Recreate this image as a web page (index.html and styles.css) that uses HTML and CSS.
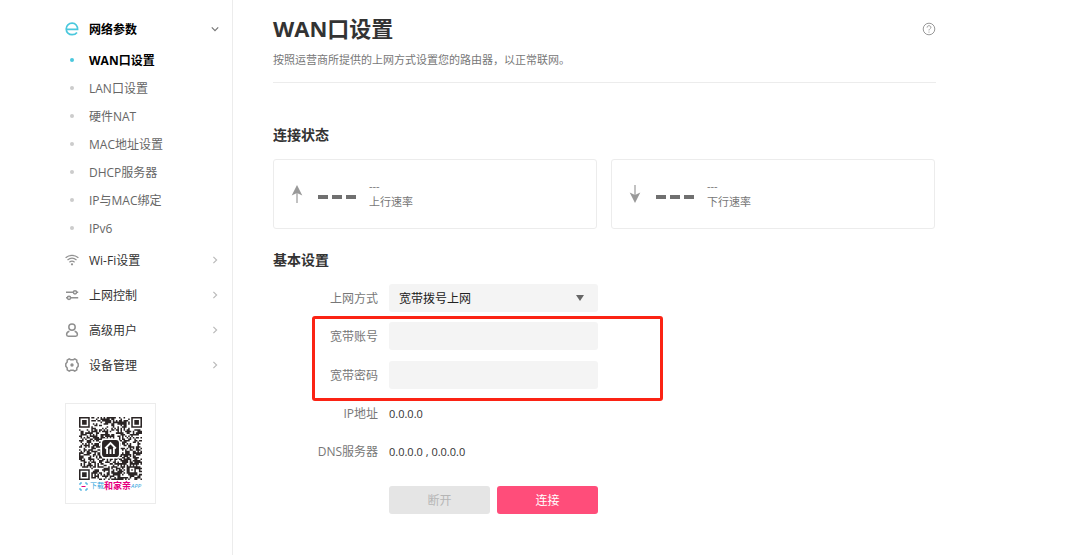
FILE: index.html
```html
<!DOCTYPE html>
<html lang="zh-CN">
<head>
    <meta charset="UTF-8">
    <meta name="viewport" content="width=device-width, initial-scale=1.0">
    <title>WAN口设置</title>
    <link rel="stylesheet" href="styles.css">
</head>
<body>
    <div class="page">
        <aside class="sidebar">
            <nav>
                <a class="menu-item active" href="#network">
                    <svg class="menu-icon" viewBox="0 0 14 14"><path d="M1.6 7.4H12.6C12.8 3.8 10.4 1.2 7.1 1.2C3.8 1.2 1.2 3.8 1.2 7C1.2 10.2 3.8 12.7 7.1 12.7C9.2 12.7 10.9 11.9 12 10.5"/></svg>
                    <span>网络参数</span>
                    <svg class="chevron" viewBox="0 0 8 8"><path d="M0.8 2.4L4 5.6L7.2 2.4"/></svg>
                </a>
                <ul class="submenu">
                    <li class="current"><a href="#wan">WAN口设置</a></li>
                    <li><a href="#lan">LAN口设置</a></li>
                    <li><a href="#nat">硬件NAT</a></li>
                    <li><a href="#mac">MAC地址设置</a></li>
                    <li><a href="#dhcp">DHCP服务器</a></li>
                    <li><a href="#bind">IP与MAC绑定</a></li>
                    <li><a href="#ipv6">IPv6</a></li>
                </ul>
                <a class="menu-item" href="#wifi">
                    <svg class="menu-icon thin" viewBox="0 0 14 14"><path d="M0.6 4.8C4.3 1.5 9.7 1.5 13.4 4.8M2.5 7C5.2 4.8 8.8 4.8 11.5 7M4.4 9.2C6 7.9 8 7.9 9.6 9.2"/><circle class="solid" cx="7" cy="11.3" r="1.1"/></svg>
                    <span>Wi-Fi设置</span>
                    <svg class="chevron" viewBox="0 0 8 8"><path d="M2.4 0.8L5.6 4L2.4 7.2"/></svg>
                </a>
                <a class="menu-item" href="#control">
                    <svg class="menu-icon" viewBox="0 0 14 14"><path d="M1 4.3H8.2M11.8 4.3H13.2M1 9.8H2.2M5.8 9.8H13.2"/><circle cx="10" cy="4.3" r="1.6"/><circle cx="4" cy="9.8" r="1.6"/></svg>
                    <span>上网控制</span>
                    <svg class="chevron" viewBox="0 0 8 8"><path d="M2.4 0.8L5.6 4L2.4 7.2"/></svg>
                </a>
                <a class="menu-item" href="#user">
                    <svg class="menu-icon" viewBox="0 0 14 14"><circle cx="7" cy="4.1" r="3.2"/><path d="M4.4 8.2C2.6 8.6 1.6 9.9 1.6 11.5C1.6 12.7 2.2 13.2 3.2 13.2H10.8C11.8 13.2 12.4 12.7 12.4 11.5C12.4 9.9 11.4 8.6 9.6 8.2"/></svg>
                    <span>高级用户</span>
                    <svg class="chevron" viewBox="0 0 8 8"><path d="M2.4 0.8L5.6 4L2.4 7.2"/></svg>
                </a>
                <a class="menu-item" href="#device">
                    <svg class="menu-icon" viewBox="0 0 14 14"><path d="M4.2 0.9L5.6 1.7H8.4L9.8 0.9L11.8 2.1V3.9L13.2 5.8V8.2L11.8 10.1V11.9L9.8 13.1L8.4 12.3H5.6L4.2 13.1L2.2 11.9V10.1L0.8 8.2V5.8L2.2 3.9V2.1Z"/><circle class="solid" cx="7" cy="7" r="1.7"/></svg>
                    <span>设备管理</span>
                    <svg class="chevron" viewBox="0 0 8 8"><path d="M2.4 0.8L5.6 4L2.4 7.2"/></svg>
                </a>
            </nav>
            <div class="qr-card">
                <svg class="qr" viewBox="0 0 41 41" role="img" aria-label="和家亲APP">
                    <path id="qr-modules"/>
                    <rect class="qr-clear" x="14" y="14" width="13" height="13" rx="3"/>
                    <rect class="qr-logo" x="15" y="15" width="11" height="11" rx="2"/>
                    <path class="qr-house" d="M17 20.5L20.5 17L24 20.5M18.3 20V24M22.7 20V24M20.5 21V24"/>
                </svg>
                <div class="qr-text">
                    <svg class="scan" viewBox="0 0 9 9"><path d="M1 3V1H3M6 1H8V3M8 6V8H6M3 8H1V6"/><path class="scan-line" d="M2.5 4.5H6.5"/></svg>
                    <span>下载</span><b>和家亲</b><i>APP</i>
                </div>
            </div>
        </aside>

        <main class="content">
            <header class="page-head">
                <div>
                    <h1>WAN口设置</h1>
                    <p>按照运营商所提供的上网方式设置您的路由器，以正常联网。</p>
                </div>
                <button class="help" type="button" aria-label="帮助">
                    <svg viewBox="0 0 14 14"><circle cx="7" cy="7" r="5.8"/><path d="M5.1 5.6C5.1 4.4 5.9 3.7 7 3.7C8.1 3.7 8.9 4.4 8.9 5.4C8.9 6.7 7 6.9 7 8.4M7 9.6V10.6"/></svg>
                </button>
            </header>

            <h2>连接状态</h2>
            <div class="cards">
                <div class="card">
                    <svg class="arrow" viewBox="0 0 12 20"><path class="line" d="M6 5V19"/><path d="M6 1L11.3 11.5L6 9L0.7 11.5Z"/></svg>
                    <div class="dashes"><span></span><span></span><span></span></div>
                    <div class="rate"><span>---</span><span>上行速率</span></div>
                </div>
                <div class="card">
                    <svg class="arrow" viewBox="0 0 12 20"><path class="line" d="M6 1V15"/><path d="M6 19L11.3 8.5L6 11L0.7 8.5Z"/></svg>
                    <div class="dashes"><span></span><span></span><span></span></div>
                    <div class="rate"><span>---</span><span>下行速率</span></div>
                </div>
            </div>

            <h2>基本设置</h2>
            <form class="form">
                <div class="row">
                    <label for="mode">上网方式</label>
                    <div class="select">
                        <select id="mode">
                            <option>宽带拨号上网</option>
                        </select>
                    </div>
                </div>
                <div class="account">
                    <div class="row">
                        <label for="account">宽带账号</label>
                        <input id="account" type="text">
                    </div>
                    <div class="row">
                        <label for="password">宽带密码</label>
                        <input id="password" type="password">
                    </div>
                </div>
                <div class="row">
                    <span class="label">IP地址</span>
                    <span class="value">0.0.0.0</span>
                </div>
                <div class="row">
                    <span class="label">DNS服务器</span>
                    <span class="value">0.0.0.0 , 0.0.0.0</span>
                </div>
                <div class="actions">
                    <button type="button" disabled>断开</button>
                    <button class="primary" type="button">连接</button>
                </div>
            </form>
        </main>
    </div>

    <script>
        const size = 41;
        let seed = 2024;

        function random() {
            seed = (seed * 1103515245 + 12345) % 2147483648;
            return seed / 2147483648;
        }

        // distance rings of a 7x7 finder: dark outside, light ring, dark core
        function finder(x, y) {
            const corners = [[3, 3], [size - 4, 3], [3, size - 4]];
            for (const [cx, cy] of corners) {
                const d = Math.max(Math.abs(x - cx), Math.abs(y - cy));
                if (d <= 4) return d !== 2 && d !== 4;
            }
            const d = Math.max(Math.abs(x - 34), Math.abs(y - 34));
            return d <= 2 ? d !== 1 : null;
        }

        let path = "";
        for (let y = 0; y < size; y++) {
            for (let x = 0; x < size; x++) {
                const noise = random() < 0.52;
                const fixed = finder(x, y);
                if (fixed === null ? noise : fixed) {
                    path += `M${x} ${y}h1v1h-1z`;
                }
            }
        }
        document.getElementById("qr-modules").setAttribute("d", path);
    </script>
</body>
</html>
```
FILE: styles.css
```css
*,
*::before,
*::after {
    box-sizing: border-box;
}
body {
    margin: 0;
    font-family: "Open Sans", "Noto Sans CJK SC", sans-serif;
    font-size: 12px;
    color: #333;
    background-color: #fff;
}
a {
    color: inherit;
    text-decoration: none;
}
svg {
    display: block;
    flex: none;
    fill: none;
}
.page {
    display: flex;
    min-height: 100vh;
}

/* sidebar */
.sidebar {
    flex: none;
    width: 233px;
    padding: 11px 13px 20px 65px;
    border-right: 1px solid #ececec;
}
.menu-item {
    display: flex;
    align-items: center;
    height: 35px;
}
.menu-item span {
    flex: 1;
    margin-left: 10px;
}
.menu-icon {
    width: 14px;
    height: 14px;
    stroke: #909090;
    stroke-width: 1.5;
}
.menu-icon.thin {
    stroke-width: 1.2;
}
.menu-icon .solid {
    fill: #909090;
    stroke: none;
}
.chevron {
    width: 8px;
    height: 8px;
    stroke: #bbb;
    stroke-width: 1.2;
}
.active {
    font-weight: bold;
    color: #000;
}
.active .menu-icon {
    stroke: #4ac8dd;
    stroke-width: 1.7;
}
.active .chevron {
    stroke: #777;
}
.submenu {
    margin: 0;
    padding: 0;
    list-style: none;
    color: #666;
}
.submenu li {
    display: flex;
    align-items: center;
    gap: 15px;
    height: 28px;
    padding-left: 5px;
}
.submenu li::before {
    content: "";
    width: 4px;
    height: 4px;
    border-radius: 50%;
    background-color: #ccc;
}
.submenu .current {
    font-weight: bold;
    color: #000;
}
.submenu .current::before {
    background-color: #4ac8dd;
}
.qr-card {
    width: 91px;
    height: 101px;
    margin-top: 21px;
    padding: 13px;
    border: 1px solid #ececec;
}
.qr {
    width: 63px;
    height: 63px;
}
#qr-modules,
.qr-logo {
    fill: #2a2424;
}
.qr-clear {
    fill: #fff;
}
.qr-house {
    stroke: #fff;
    stroke-width: 1.2;
}
.qr-text {
    display: flex;
    align-items: center;
    height: 12px;
    line-height: 12px;
    white-space: nowrap;
    color: #2ea3dc;
}
.qr-text span {
    margin-left: 2px;
    font-size: 7px;
}
.qr-text b {
    font-size: 9px;
    color: #e5007f;
}
.qr-text i {
    font-size: 6px;
}
.scan {
    width: 9px;
    height: 9px;
    stroke: #2ea3dc;
}
.scan-line {
    stroke: #e5007f;
}

/* content */
.content {
    flex: 1;
    padding: 12px 144px 40px 40px;
}
.page-head {
    display: flex;
    justify-content: space-between;
    align-items: flex-start;
    height: 71px;
    border-bottom: 1px solid #ececec;
}
h1 {
    margin: 0;
    font-size: 22px;
    line-height: 32px;
}
.page-head p {
    margin: 6px 0 0;
    font-size: 11px;
    line-height: 20px;
    color: #777;
}
.help {
    margin-top: 10px;
    padding: 0;
    border: none;
    background: none;
    cursor: pointer;
}
.help svg {
    width: 14px;
    height: 14px;
    stroke: #999;
}
h2 {
    margin: 0;
    font-size: 14px;
    line-height: 20px;
}
.page-head + h2 {
    margin-top: 42px;
}
.cards {
    display: flex;
    gap: 14px;
    margin: 14px 1px 21px 0;
}
.card {
    display: flex;
    flex: 1;
    align-items: center;
    height: 70px;
    padding-left: 17px;
    border: 1px solid #ececec;
    border-radius: 3px;
}
.arrow {
    width: 12px;
    height: 20px;
    fill: #999;
}
.arrow .line {
    stroke: #999;
    stroke-width: 1.2;
}
.dashes {
    display: flex;
    gap: 4px;
    margin: 6px 13px 0 15px;
}
.dashes span {
    width: 10px;
    height: 4px;
    background-color: #707070;
}
.rate {
    display: flex;
    flex-direction: column;
    font-size: 11px;
    line-height: 16px;
    color: #777;
}

/* form */
.form {
    display: flex;
    flex-direction: column;
    gap: 10px;
    margin-top: 14px;
}
.row {
    display: flex;
    align-items: center;
    gap: 11px;
    height: 28px;
}
.row label,
.row .label {
    width: 105px;
    text-align: right;
    color: #777;
}
.account {
    position: relative;
    display: flex;
    flex-direction: column;
    gap: 11px;
}
.account::after {
    content: "";
    position: absolute;
    top: -6px;
    left: 39px;
    width: 351px;
    height: 85px;
    border: 3px solid #fb2314;
    border-radius: 3px;
    pointer-events: none;
}
.select {
    position: relative;
}
.select::after {
    content: "";
    position: absolute;
    top: 11px;
    right: 14px;
    border: 4px solid transparent;
    border-top: 6px solid #666;
    border-bottom: none;
    pointer-events: none;
}
.row select,
.row input {
    display: block;
    width: 209px;
    height: 28px;
    padding: 0 10px;
    border: none;
    border-radius: 3px;
    font: inherit;
    color: #222;
    background-color: #f4f4f4;
    appearance: none;
}
.value {
    font-size: 11px;
}
.actions {
    display: flex;
    gap: 7px;
    margin: 11px 0 0 116px;
}
.actions button {
    width: 101px;
    height: 28px;
    padding: 0;
    border: none;
    border-radius: 3px;
    font: inherit;
    color: #b5b5b5;
    background-color: #e5e5e5;
}
.actions .primary {
    color: #fff;
    background-color: #ff4d7a;
    cursor: pointer;
}
```
